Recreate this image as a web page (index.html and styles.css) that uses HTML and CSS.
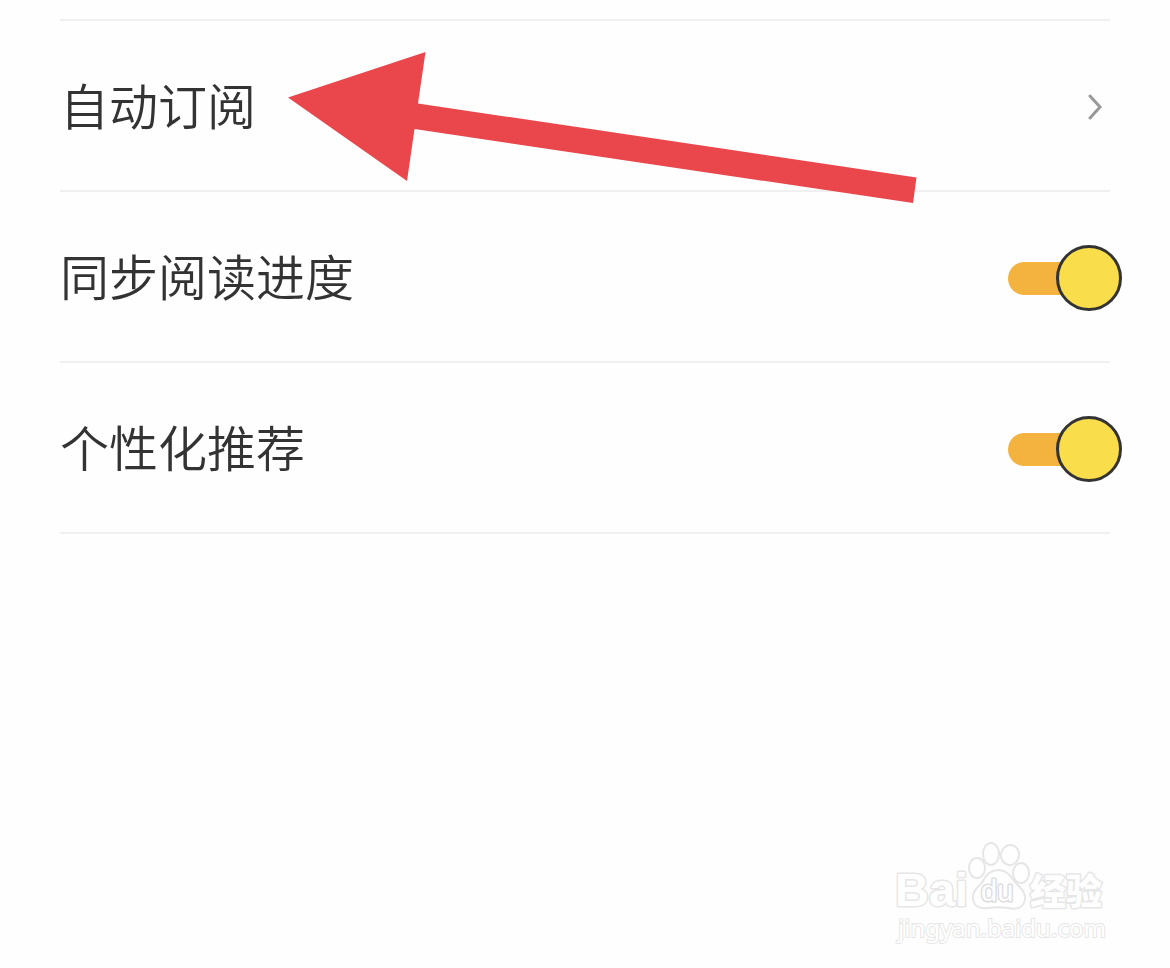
FILE: index.html
```html
<!DOCTYPE html>
<html lang="zh-CN">
<head>
    <meta charset="UTF-8">
    <meta name="viewport" content="width=device-width, initial-scale=1.0">
    <title>设置</title>
    <link rel="stylesheet" href="styles.css">
</head>
<body>
    <main class="settings">
        <a class="row" href="#subscribe">
            <span class="label">自动订阅</span>
            <svg class="chevron" width="16" height="28" viewBox="0 0 16 28" aria-hidden="true">
                <path d="M3 4l10 11L3 26"/>
            </svg>
        </a>
        <div class="row">
            <label class="label" for="sync">同步阅读进度</label>
            <input class="switch" type="checkbox" id="sync" checked>
        </div>
        <div class="row">
            <label class="label" for="recommend">个性化推荐</label>
            <input class="switch" type="checkbox" id="recommend" checked>
        </div>
        <svg class="arrow" width="630" height="154" viewBox="0 0 630 154" aria-hidden="true">
            <path d="M1 46.500L138.500 1L131 52.500L629.500 126.500L626 152L127.500 78L120 130Z"/>
        </svg>
    </main>
    <footer class="watermark">
        <svg class="logo" width="210" height="72" viewBox="0 0 210 72">
            <text class="brand" x="-1" y="66">Bai</text>
            <ellipse cx="81" cy="28" rx="8" ry="10"/>
            <ellipse cx="95" cy="14" rx="8" ry="11"/>
            <ellipse cx="114" cy="15" rx="9" ry="10" transform="rotate(12 114 15)"/>
            <ellipse cx="125" cy="33" rx="8" ry="10"/>
            <path d="M102 30c-8 0-12 5-15 11-3 5-11 9-10 18 1 8 8 10 14 9 8-1 14-1 21 0 8 2 16 0 17-9 1-8-7-13-11-18-4-6-8-11-16-11z"/>
            <text class="du" x="85" y="61">du</text>
            <text class="jingyan" x="134" y="65">经验</text>
        </svg>
        <span class="site">jingyan.baidu.com</span>
    </footer>
</body>
</html>
```

FILE: styles.css
```css
body {
    display: flex;
    flex-direction: column;
    min-height: 100vh;
    margin: 0;
    font-family: "Noto Sans CJK SC", sans-serif;
    background-color: #fefefe;
}
.settings {
    position: relative;
    margin: 19px 60px 0;
    border-top: 2px solid #f0f0f0;
}
.row {
    display: flex;
    align-items: center;
    justify-content: space-between;
    height: 169px;
    border-bottom: 2px solid #f0f0f0;
    color: #333;
    text-decoration: none;
}
.label {
    padding-bottom: 4px;
    font-size: 49px;
    font-weight: 350;
}
.chevron {
    margin-right: 7px;
    fill: none;
    stroke: #999;
    stroke-width: 3;
    stroke-linecap: round;
}
.switch {
    appearance: none;
    position: relative;
    width: 114px;
    height: 66px;
    margin: 2px -12px 0 0;
    cursor: pointer;
}
.switch::before {
    content: "";
    position: absolute;
    left: 0;
    top: 17px;
    width: 100px;
    height: 33px;
    border-radius: 17px;
    background-color: #f4b23e;
}
.switch::after {
    content: "";
    position: absolute;
    right: 0;
    top: 0;
    box-sizing: border-box;
    width: 66px;
    height: 66px;
    border: 3px solid #333;
    border-radius: 50%;
    background-color: #f9dd4a;
}
.switch:not(:checked)::before {
    background-color: #ddd;
}
.switch:not(:checked)::after {
    right: auto;
    left: 0;
}
.arrow {
    position: absolute;
    left: 227px;
    top: 30px;
    fill: #e9474c;
    pointer-events: none;
}
.watermark {
    display: flex;
    flex-direction: column;
    align-self: flex-end;
    margin: auto 64px 24px 0;
}
.logo {
    overflow: visible;
    fill: #fff;
    stroke: #e6e6e6;
    stroke-width: 2;
}
.logo text {
    paint-order: stroke;
    stroke-width: 3;
    stroke-linejoin: round;
}
.brand {
    font: bold 47px "Liberation Sans", sans-serif;
}
.logo .du {
    font: 29px "Liberation Sans", sans-serif;
    stroke: #ddd;
}
.jingyan {
    font: 900 36px "Noto Sans CJK SC", sans-serif;
}
.site {
    padding-left: 2px;
    color: #fff;
    font: 24px/32px "Noto Sans", sans-serif;
    -webkit-text-stroke: 2px #e6e6e6;
    paint-order: stroke fill;
}
```
